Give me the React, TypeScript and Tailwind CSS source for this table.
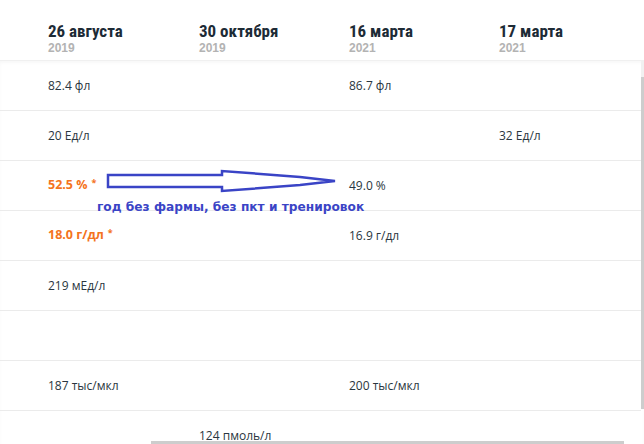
const dates = [
  { day: "26 августа", year: "2019" },
  { day: "30 октября", year: "2019" },
  { day: "16 марта", year: "2021" },
  { day: "17 марта", year: "2021" },
];

type Cell = { text: string; warn?: boolean } | null;

const rows: Cell[][] = [
  [{ text: "82.4 фл" }, null, { text: "86.7 фл" }, null],
  [{ text: "20 Ед/л" }, null, null, { text: "32 Ед/л" }],
  [{ text: "52.5 %", warn: true }, null, { text: "49.0 %" }, null],
  [{ text: "18.0 г/дл", warn: true }, null, { text: "16.9 г/дл" }, null],
  [{ text: "219 мЕд/л" }, null, null, null],
  [null, null, null, null],
  [{ text: "187 тыс/мкл" }, null, { text: "200 тыс/мкл" }, null],
  [null, { text: "124 пмоль/л" }, null, null],
];

export default function App() {
  return (
    <div className="relative w-[644px] h-[444px] overflow-hidden bg-white font-['Open_Sans','Noto_Sans',sans-serif]">
      {/* header with dates */}
      <div className="h-[60px] pl-[48px] grid grid-cols-[151px_150px_150px_150px] pt-[21px] bg-white">
        {dates.map((d, i) => (
          <div key={i} className="flex flex-col">
            <span className="text-[17px] leading-[20px] font-bold text-[#1d2b36] font-['Liberation_Sans_Narrow','Roboto_Condensed','Liberation_Sans',sans-serif]">
              {d.day}
            </span>
            <span className="text-[12px] leading-[14px] font-bold text-[#b3b3b3] font-['Liberation_Sans_Narrow','Liberation_Sans',sans-serif]">
              {d.year}
            </span>
          </div>
        ))}
      </div>

      {/* table body */}
      <div className="relative border-t border-[#f0f0f0] shadow-[inset_0_2px_3px_rgba(0,0,0,0.03)] pr-[3px]">
        {rows.map((row, r) => (
          <div
            key={r}
            className="h-[50px] pl-[48px] grid grid-cols-[151px_150px_150px_150px] items-center border-b border-[#ebebeb] text-[12px]"
          >
            {row.map((c, i) =>
              c?.warn ? (
                <span key={i} className="font-bold text-[#f47320] text-[12.5px]">
                  {c.text}
                  <sup className="ml-[4px] text-[9px] top-[-3px]">*</sup>
                </span>
              ) : (
                <span key={i} className="text-[#2a3640]">
                  {c?.text ?? ""}
                </span>
              )
            )}
          </div>
        ))}
      </div>

      {/* scrollbars */}
      <div className="absolute right-0 top-[60px] w-[3px] h-[17px] bg-[#f1f1f1]" />
      <div className="absolute right-0 top-[77px] w-[3px] h-[332px] bg-[#cdcdcd]" />
      <div className="absolute left-[151px] bottom-0 w-[473px] h-[3px] bg-[#cdcdcd]" />

      {/* hand-drawn annotation */}
      <svg className="absolute left-0 top-0" width="644" height="444">
        <polygon
          points="108,175 222,175 222,171 300,177 335,181 300,185 222,191 222,187 108,187"
          fill="none"
          stroke="#3a44c6"
          strokeWidth="2.5"
          strokeLinejoin="miter"
        />
      </svg>
      <div className="absolute left-[97px] top-[199px] text-[12.2px] leading-[16px] font-bold text-[#3a44c6] font-['DejaVu_Sans',sans-serif]">
        год без фармы, без пкт и тренировок
      </div>
    </div>
  );
}
